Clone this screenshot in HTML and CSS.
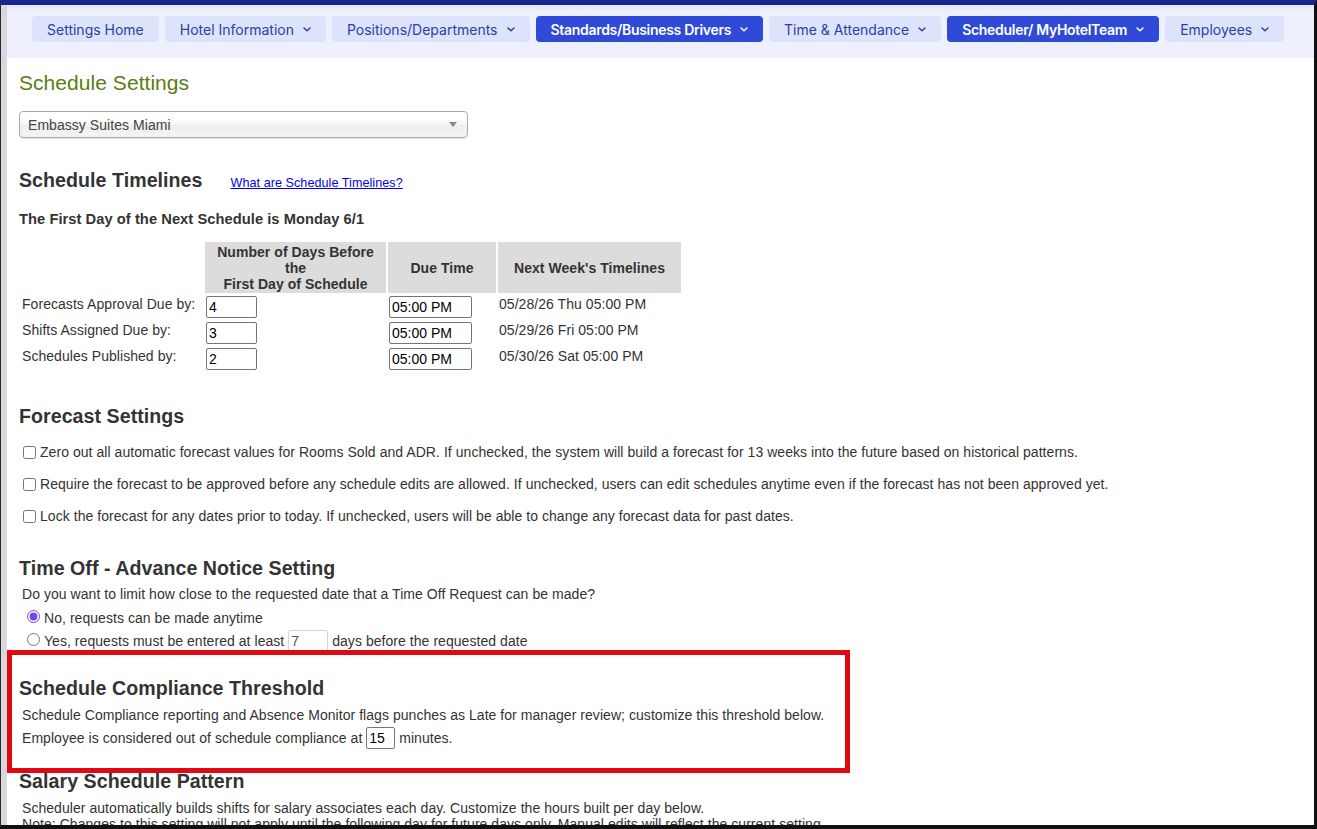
FILE: index.html
```html
<!DOCTYPE html>
<html lang="en">
<head>
    <meta charset="UTF-8">
    <meta name="viewport" content="width=device-width, initial-scale=1.0">
    <title>Schedule Settings</title>
    <link rel="stylesheet" href="styles.css">
</head>
<body>
    <div class="frame">
        <div class="edge"></div>
        <div class="page">
            <nav class="settings-nav">
                <a class="tab" href="#">Settings Home</a>
                <a class="tab" href="#">Hotel Information <svg class="chev" viewBox="0 0 8 5"><path d="M1 1l3 2.8 3-2.8"/></svg></a>
                <a class="tab" href="#">Positions/Departments <svg class="chev" viewBox="0 0 8 5"><path d="M1 1l3 2.8 3-2.8"/></svg></a>
                <a class="tab active" href="#">Standards/Business Drivers <svg class="chev" viewBox="0 0 8 5"><path d="M1 1l3 2.8 3-2.8"/></svg></a>
                <a class="tab" href="#">Time &amp; Attendance <svg class="chev" viewBox="0 0 8 5"><path d="M1 1l3 2.8 3-2.8"/></svg></a>
                <a class="tab active" href="#">Scheduler/ MyHotelTeam <svg class="chev" viewBox="0 0 8 5"><path d="M1 1l3 2.8 3-2.8"/></svg></a>
                <a class="tab" href="#">Employees <svg class="chev" viewBox="0 0 8 5"><path d="M1 1l3 2.8 3-2.8"/></svg></a>
            </nav>

            <div class="content">
                <h1 class="page-title">Schedule Settings</h1>
                <div class="hotel-select">
                    <span>Embassy Suites Miami</span>
                    <b class="arrow"></b>
                </div>

                <div class="timeline-head">
                    <h3 class="block-title">Schedule Timelines</h3>
                    <a class="help-link" href="#">What are Schedule Timelines?</a>
                </div>
                <p class="next-start">The First Day of the Next Schedule is Monday 6/1</p>

                <table class="timelines">
                    <tr>
                        <th class="blank"></th>
                        <th class="c-days">Number of Days Before<br>the<br>First Day of Schedule</th>
                        <th class="c-time">Due Time</th>
                        <th class="c-next">Next Week's Timelines</th>
                    </tr>
                    <tr>
                        <td>Forecasts Approval Due by:</td>
                        <td><input class="days" type="text" value="4"></td>
                        <td><input class="time" type="text" value="05:00 PM"></td>
                        <td>05/28/26 Thu 05:00 PM</td>
                    </tr>
                    <tr>
                        <td>Shifts Assigned Due by:</td>
                        <td><input class="days" type="text" value="3"></td>
                        <td><input class="time" type="text" value="05:00 PM"></td>
                        <td>05/29/26 Fri 05:00 PM</td>
                    </tr>
                    <tr>
                        <td>Schedules Published by:</td>
                        <td><input class="days" type="text" value="2"></td>
                        <td><input class="time" type="text" value="05:00 PM"></td>
                        <td>05/30/26 Sat 05:00 PM</td>
                    </tr>
                </table>

                <h3 class="block-title forecast-title">Forecast Settings</h3>
                <label class="check-row"><input type="checkbox">Zero out all automatic forecast values for Rooms Sold and ADR. If unchecked, the system will build a forecast for 13 weeks into the future based on historical patterns.</label>
                <label class="check-row"><input type="checkbox">Require the forecast to be approved before any schedule edits are allowed. If unchecked, users can edit schedules anytime even if the forecast has not been approved yet.</label>
                <label class="check-row"><input type="checkbox">Lock the forecast for any dates prior to today. If unchecked, users will be able to change any forecast data for past dates.</label>

                <h3 class="block-title timeoff-title">Time Off - Advance Notice Setting</h3>
                <p class="question">Do you want to limit how close to the requested date that a Time Off Request can be made?</p>
                <label class="radio-row"><input type="radio" name="notice" checked>No, requests can be made anytime</label>
                <label class="radio-row"><input type="radio" name="notice">Yes, requests must be entered at least <input class="notice-days" type="text" value="7" disabled> days before the requested date</label>

                <div class="compliance">
                    <h3 class="block-title">Schedule Compliance Threshold</h3>
                    <p class="line first">Schedule Compliance reporting and Absence Monitor flags punches as Late for manager review; customize this threshold below.</p>
                    <p class="line">Employee is considered out of schedule compliance at <input class="mins" type="text" value="15"> minutes.</p>
                    <div class="highlight"></div>
                </div>

                <h3 class="block-title salary-title">Salary Schedule Pattern</h3>
                <p class="salary-text">Scheduler automatically builds shifts for salary associates each day. Customize the hours built per day below.<br>Note: Changes to this setting will not apply until the following day for future days only. Manual edits will reflect the current setting</p>
            </div>
        </div>
    </div>
</body>
</html>
```

FILE: styles.css
```css
body {
    margin: 0;
    font-family: "Liberation Sans", Arial, sans-serif;
    font-size: 14px;
    color: #333;
    background: #fff;
}
.frame {
    width: 1317px;
    height: 829px;
    box-sizing: border-box;
    border-top: 5px solid #17258c;
    border-right: 3px solid #111;
    border-bottom: 4px solid #111;
    border-left: 1px solid #2a2a2a;
    display: flex;
    overflow: hidden;
}
.edge {
    flex: none;
    width: 6px;
    background-color: #d8d8dc;
}
.page {
    flex: 1;
    min-width: 0;
    background-color: #fff;
}

/* top settings menu */
.settings-nav {
    display: flex;
    gap: 6px;
    height: 53px;
    box-sizing: border-box;
    padding: 11px 0 16px 25px;
    background: linear-gradient(#e2e6f7, #eef1fd 7px);
}
.tab {
    display: flex;
    align-items: center;
    height: 26px;
    padding: 0 15px;
    border-radius: 4px;
    background-color: #dce3fb;
    color: #2f3ea6;
    font-family: Inter, "Noto Sans", sans-serif;
    font-size: 14px;
    font-weight: 400;
    text-decoration: none;
    white-space: nowrap;
}
.tab.active {
    background-color: #2e4ad6;
    color: #fff;
    font-weight: 600;
    letter-spacing: -0.3px;
}
.chev {
    width: 8px;
    height: 5px;
    margin-left: 9px;
    fill: none;
    stroke: currentColor;
    stroke-width: 1.5;
    stroke-linecap: round;
    stroke-linejoin: round;
}

.content {
    padding: 0 12px;
    letter-spacing: 0.05px;
}
.page-title {
    margin: 13px 0 0;
    font-size: 21px;
    line-height: 24px;
    font-weight: normal;
    color: #5a7d12;
}
.hotel-select {
    display: flex;
    justify-content: space-between;
    align-items: center;
    width: 449px;
    height: 27px;
    box-sizing: border-box;
    margin-top: 16px;
    padding: 0 10px 0 8px;
    border: 1px solid #aaa;
    border-radius: 4px;
    background: linear-gradient(#fff 20%, #f6f6f6 50%, #eee 52%, #f4f4f4);
    box-shadow: 0 1px 1px rgba(0, 0, 0, 0.1);
    color: #444;
}
.arrow {
    width: 0;
    height: 0;
    border-left: 4px solid transparent;
    border-right: 4px solid transparent;
    border-top: 5px solid #888;
}

.block-title {
    margin: 0;
    font-size: 19.6px;
    line-height: 24px;
    font-weight: bold;
    color: #333;
}
.timeline-head {
    display: flex;
    align-items: baseline;
    margin-top: 30px;
}
.help-link {
    margin-left: 28px;
    font-size: 12.6px;
    color: #0000ee;
}
.next-start {
    margin: 18px 0 0;
    font-size: 14.7px;
    line-height: 18px;
    font-weight: bold;
}

.timelines {
    margin-top: 12px;
    table-layout: fixed;
    width: 664px;
    border-spacing: 2px;
}
.timelines th, .timelines td {
    box-sizing: border-box;
    padding: 1px;
    line-height: 16px;
    vertical-align: top;
    text-align: left;
    font-weight: normal;
}
.timelines th {
    height: 51px;
    vertical-align: middle;
    text-align: center;
    font-weight: bold;
    background-color: #dcdcdc;
}
.timelines th.blank {
    width: 182px;
    background: none;
}
.c-days { width: 181px; }
.c-time { width: 108px; }
.c-next { width: 183px; }

input[type="text"] {
    height: 22px;
    box-sizing: border-box;
    margin: 0;
    padding: 0 2px;
    border: 1px solid #767676;
    border-radius: 2px;
    font-family: "Liberation Sans", Arial, sans-serif;
    font-size: 14px;
    color: #000;
}
.days { width: 51px; }
.time { width: 83px; }

.forecast-title {
    margin-top: 31px;
}
.check-row {
    display: block;
    margin-top: 12px;
    line-height: 20px;
}
.forecast-title + .check-row {
    margin-top: 14px;
}
.check-row input {
    margin: 3px 4px 3px 4px;
    vertical-align: -2px;
}

.timeoff-title {
    margin-top: 30px;
}
.question {
    margin: 5px 0 0;
    padding-left: 3px;
    line-height: 18px;
}
.radio-row {
    display: block;
    padding-left: 3px;
    line-height: 23px;
}
.question + .radio-row {
    margin-top: 4px;
}
.radio-row input[type="radio"] {
    margin: 3px 4px 0 5px;
    accent-color: #7447e8;
}
.notice-days {
    width: 40px;
    height: 21px;
    border-color: #d4d4d4 !important;
    background-color: #fff;
    color: #555 !important;
}

.compliance {
    position: relative;
    margin-top: 23px;
}
.line {
    margin: 0;
    padding-left: 3px;
    line-height: 23px;
}
.line.first {
    margin-top: 4px;
}
.mins {
    width: 29px;
    height: 21px;
}
.highlight {
    position: absolute;
    top: -26px;
    left: -12px;
    width: 843px;
    height: 123px;
    box-sizing: border-box;
    border: 5px solid #e30613;
    pointer-events: none;
}

.salary-title {
    margin-top: 19px;
}
.salary-text {
    margin: 7px 0 0;
    padding-left: 3px;
    line-height: 16px;
}
```
